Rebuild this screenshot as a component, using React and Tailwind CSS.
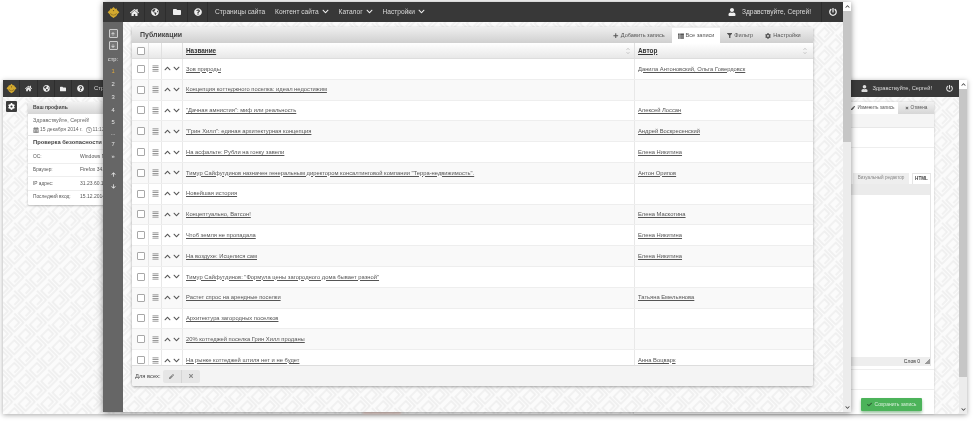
import {
  FaAlignJustify,
  FaArrowDown,
  FaArrowUp,
  FaCalendarAlt,
  FaCheck,
  FaChevronDown,
  FaChevronUp,
  FaCog,
  FaFilter,
  FaFolder,
  FaGlobeAmericas,
  FaHome,
  FaPen,
  FaPlus,
  FaPowerOff,
  FaQuestionCircle,
  FaRegClock,
  FaThList,
  FaTimes,
  FaUser,
} from "react-icons/fa";

const rows = [
  ["Зов природы", "Данила Антоновский, Ольга Говердовск"],
  ["Концепция коттеджного поселка: идеал недостижим", ""],
  ["\"Дачная амнистия\": миф или реальность", "Алексей Лоссан"],
  ["\"Грин Хилл\": единая архитектурная концепция", "Андрей Воскресенский"],
  ["На асфальте: Рубли на гонку завели", "Елена Никитина"],
  ["Тимур Сайфутдинов назначен генеральным директором консалтинговой компании \"Терра-недвижимость\".", "Антон Орипов"],
  ["Новейшая история", ""],
  ["Концептуально, Ватсон!", "Елена Маскотина"],
  ["Чтоб земля не пропадала", "Елена Никитина"],
  ["На воздухе: Исцелися сам", "Елена Никитина"],
  ["Тимур Сайфутдинов: \"Формула цены загородного дома бывает разной\"", ""],
  ["Растет спрос на арендные поселки", "Татьяна Емельянова"],
  ["Архитектура загородных поселков", ""],
  ["20% коттеджей поселка Грин Хилл проданы", ""],
  ["На рынке коттеджей штиля нет и не будет", "Анна Воцварк"],
];

const securityRows = [
  ["ОС:", "Windows NT 6.1"],
  ["Браузер:", "Firefox 34.0"],
  ["IP адрес:", "31.23.60.124"],
  ["Последний вход:", "15.12.2014"],
];

const pages = ["2", "3", "4", "5"];

function Logo({ size }) {
  return (
    <svg width={size} height={size} viewBox="0 0 20 20">
      <path
        d="M10 1.5l3 3 1.5-1 1 2.500 3.500 3.500-3 3-1.500 3-4.500 3-4.500-3-1.500-3-3-3 3.500-3.500 1-2.500 1.500 1z"
        fill="#d3a92f"
      />
      <path d="M5.5 11a4.500 3 0 0 0 9 0" fill="none" stroke="#6b5620" strokeWidth="0.9" />
      <circle cx="10" cy="7" r="1" fill="#6b5620" />
    </svg>
  );
}

function Pattern({ id }) {
  return (
    <svg className="absolute inset-0 h-full w-full" aria-hidden="true">
      <defs>
        <pattern id={id} width="16" height="16" patternUnits="userSpaceOnUse" patternTransform="rotate(45)">
          <path d="M1 1h13v13H4V4h7v7" fill="none" stroke="#ededed" strokeWidth="1.4" />
        </pattern>
      </defs>
      <rect width="100%" height="100%" fill={`url(#${id})`} />
    </svg>
  );
}

function Scrollbar({ thumb }) {
  return (
    <div className="flex h-full w-[8px] flex-col bg-[#ececec] text-[#444]">
      <div className="flex h-[9px] shrink-0 items-center justify-center bg-white">
        <FaChevronUp className="text-[5px]" />
      </div>
      <div className={`${thumb} shrink-0 bg-[#c6c6c6]`} />
      <div className="flex-1" />
      <div className="flex h-[9px] shrink-0 items-center justify-center">
        <FaChevronDown className="text-[5px]" />
      </div>
    </div>
  );
}

function NavIcon({ children, w }) {
  return (
    <div className={`${w} flex h-full items-center justify-center border-r border-[#2d2d2d] text-[#eeeeee]`}>
      {children}
    </div>
  );
}

function MenuItem({ label, arrow }) {
  return (
    <div className="flex items-center gap-[3px] whitespace-nowrap text-[6.6px] text-[#d8d8d8]">
      {label}
      {arrow && <FaChevronDown className="text-[7px] text-[#eeeeee]" />}
    </div>
  );
}

function PanelTab({ icon, label, active, w, size }) {
  return (
    <div
      className={`${w} ${size} flex h-full items-center justify-center gap-[2px] whitespace-nowrap text-[#555] ${
        active ? "bg-white" : ""
      }`}
    >
      {icon}
      {label}
    </div>
  );
}

function Checkbox() {
  return <span className="ml-[1px] block h-[8px] w-[8px] rounded-[1px] border border-[#a8a8a8] bg-white" />;
}

function SortArrows() {
  return (
    <span className="flex flex-col text-[#c4c4c4]">
      <FaChevronUp className="text-[4px]" />
      <FaChevronDown className="text-[4px]" />
    </span>
  );
}

function BackWindow() {
  return (
    <div className="absolute left-[3px] top-[80px] flex h-[334px] w-[964px] shadow-[0_1px_5px_rgba(0,0,0,0.35)]">
      <div className="flex min-w-0 flex-1 flex-col">
        <header className="flex h-[17px] shrink-0 items-center bg-[#3a3a3a]">
          <NavIcon w="w-[17px]">
            <Logo size={11} />
          </NavIcon>
          <NavIcon w="w-[18px]">
            <FaHome className="text-[7px]" />
          </NavIcon>
          <NavIcon w="w-[17px]">
            <FaGlobeAmericas className="text-[7px]" />
          </NavIcon>
          <NavIcon w="w-[17px]">
            <FaFolder className="text-[6px]" />
          </NavIcon>
          <NavIcon w="w-[17px]">
            <FaQuestionCircle className="text-[7px]" />
          </NavIcon>
          <span className="ml-[5px] text-[6px] text-[#ddd]">Страницы</span>
          <div className="ml-auto flex items-center pr-[6px] text-[5.7px] text-[#ddd]">
            <FaUser className="mr-[4px] text-[7px]" />
            Здравствуйте, Сергей!
            <FaPowerOff className="ml-[14px] text-[7px]" />
          </div>
        </header>
        <div className="relative flex min-h-0 flex-1 bg-[#fbfbfb]">
          <Pattern id="back-bg" />
          <div className="relative w-[25px] shrink-0 pl-[3px] pt-[4px]">
            <div className="flex h-[11px] w-[11px] items-center justify-center rounded-[1px] bg-[#3c3c3c] text-white">
              <FaCog className="text-[7px]" />
            </div>
          </div>
          <section className="relative mt-[5px] h-[103px] w-[200px] self-start overflow-hidden rounded-[1px] bg-white text-[5px] text-[#555] shadow-[0_1px_2px_rgba(0,0,0,0.25)]">
            <div className="flex h-[12px] items-center bg-gradient-to-b from-[#f2f2f2] to-[#d6d6d6] pl-[5px] font-bold text-[#444]">
              Ваш профиль
            </div>
            <div className="h-[22px] border-b border-[#e5e5e5] px-[5px] pt-[1px] text-[#666]">
              <p className="text-[5.4px] leading-[10px]">Здравствуйте, Сергей!</p>
              <p className="flex items-center gap-[1px] leading-[9px]">
                <FaCalendarAlt className="text-[6px] text-[#888]" />
                15 декабря 2014 г.
                <FaRegClock className="ml-[2px] text-[6px] text-[#888]" />
                11:12
              </p>
            </div>
            <p className="px-[5px] pt-[2px] text-[5.8px] font-bold leading-[9px] text-[#444]">Проверка безопасности</p>
            <div className="mt-[2px]">
              {securityRows.map(([label, value]) => (
                <div key={label} className="flex h-[13.6px] items-center border-t border-[#eeeeee] px-[5px]">
                  <span className="w-[47px] shrink-0 text-[4.8px]">{label}</span>
                  {value}
                </div>
              ))}
            </div>
          </section>
          <section className="relative ml-auto mr-[25px] mt-[5px] flex w-[300px] shrink-0 flex-col bg-white text-[4.6px] text-[#555] shadow-[0_0_2px_rgba(0,0,0,0.2)]">
            <div className="flex h-[12px] shrink-0 justify-end bg-gradient-to-b from-[#f2f2f2] to-[#d6d6d6]">
              <PanelTab active w="w-[50px]" size="text-[4.7px]" icon={<FaPen className="text-[4px]" />} label="Изменить запись" />
              <PanelTab w="w-[36px]" size="text-[4.7px]" icon={<FaTimes className="text-[4px]" />} label="Отмена" />
            </div>
            <div className="h-[14px] shrink-0 border-b border-[#e8e8e8] bg-[#f5f5f5]" />
            <div className="h-[20px] shrink-0 border-b border-[#eeeeee]" />
            <div className="flex h-[36px] shrink-0 items-end justify-end gap-[3px] pr-[3px]">
              <span className="flex h-[11px] w-[56px] items-center justify-center bg-[#eeeeee] text-[#888]">
                Визуальный редактор
              </span>
              <span className="flex h-[11px] w-[19px] items-center justify-center border-x border-t border-[#e5e5e5] font-bold text-[#444]">
                HTML
              </span>
            </div>
            <div className="mr-[3px] flex min-h-0 flex-1 flex-col border-x border-[#e5e5e5]">
              <div className="h-[11px] shrink-0 bg-[#ebebeb]" />
              <div className="flex-1" />
              <div className="flex h-[9px] shrink-0 items-center justify-end gap-[5px] bg-[#eeeeee] text-[5px] text-[#333]">
                Слов 0
                <span className="block h-[5px] w-[5px] bg-gradient-to-br from-transparent from-50% to-[#999] to-50%" />
              </div>
            </div>
            <div className="h-[4px] shrink-0 border-b border-[#eeeeee]" />
            <div className="h-[20px] shrink-0 border-b border-[#eeeeee]" />
            <div className="flex h-[24px] shrink-0 items-start justify-end pr-[12px] pt-[8px]">
              <button className="flex h-[13px] w-[61px] items-center justify-center gap-[3px] rounded-[1px] bg-[#4cb35a] text-[5px] text-[#d9f0dc] shadow-[0_2px_3px_rgba(60,140,70,0.5)]">
                <FaCheck className="text-[5px] text-[#2f5f35]" />
                Сохранить запись
              </button>
            </div>
          </section>
        </div>
      </div>
      <Scrollbar thumb="h-[288px]" />
    </div>
  );
}

function FrontWindow() {
  return (
    <div className="absolute left-[103px] top-[2px] flex h-[410px] w-[748px] shadow-[0_1px_6px_rgba(0,0,0,0.45)]">
      <div className="flex min-w-0 flex-1 flex-col">
        <header className="flex h-[20px] shrink-0 items-center bg-[#383838]">
          <NavIcon w="w-[21px]">
            <Logo size={13} />
          </NavIcon>
          <NavIcon w="w-[21px]">
            <FaHome className="text-[9px]" />
          </NavIcon>
          <NavIcon w="w-[21px]">
            <FaGlobeAmericas className="text-[8px]" />
          </NavIcon>
          <NavIcon w="w-[22px]">
            <FaFolder className="text-[8px]" />
          </NavIcon>
          <NavIcon w="w-[20px]">
            <FaQuestionCircle className="text-[8px]" />
          </NavIcon>
          <nav className="ml-[7px] flex items-center gap-[10px]">
            <MenuItem label="Страницы сайта" />
            <MenuItem label="Контент сайта" arrow />
            <MenuItem label="Каталог" arrow />
            <MenuItem label="Настройки" arrow />
          </nav>
          <div className="ml-auto flex h-full items-center text-[6.6px] text-[#ddd]">
            <FaUser className="mr-[6px] text-[8px] text-[#eee]" />
            Здравствуйте, Сергей!
            <div className="ml-[10px] flex h-full w-[22px] items-center justify-center border-l border-[#2d2d2d] text-[#eee]">
              <FaPowerOff className="text-[8px]" />
            </div>
          </div>
        </header>
        <div className="flex min-h-0 flex-1">
          <aside className="flex w-[20px] shrink-0 flex-col items-center bg-[#666666] pt-[7px] text-[5.8px] text-[#e6e6e6]">
            <span className="flex h-[9px] w-[9px] items-center justify-center rounded-[1px] border border-[#ccc] bg-[#777]">
              <FaArrowUp className="text-[4px]" />
            </span>
            <span className="mt-[3px] flex h-[9px] w-[9px] items-center justify-center rounded-[1px] border border-[#ccc] bg-[#777]">
              <FaArrowDown className="text-[4px]" />
            </span>
            <span className="mt-[4px] h-[11px] leading-[11px]">стр:</span>
            <span className="h-[13px] leading-[13px] text-[#e0a93a]">1</span>
            {pages.map((page) => (
              <span key={page} className="h-[12.8px] leading-[12.8px]">{page}</span>
            ))}
            <span className="h-[9px] leading-[9px]">...</span>
            <span className="h-[12px] leading-[12px]">7</span>
            <span className="h-[13px] leading-[13px]">»</span>
            <FaArrowUp className="mt-[9px] text-[5px]" />
            <FaArrowDown className="mt-[7px] text-[5px]" />
          </aside>
          <main className="relative min-w-0 flex-1 bg-[#fbfbfb] pl-[9px] pt-[5px]">
            <Pattern id="front-bg" />
            <section className="relative flex h-[359px] w-[681px] flex-col overflow-hidden rounded-[2px] bg-white shadow-[0_1px_3px_rgba(0,0,0,0.35)]">
              <div className="flex h-[16px] shrink-0 items-center bg-gradient-to-b from-[#efefef] to-[#d0d0d0]">
                <span className="pl-[8px] text-[7px] font-bold text-[#444]">Публикации</span>
                <div className="ml-auto mr-[7px] flex h-full pt-[1px]">
                  <PanelTab w="w-[54px] mr-[6px]" size="text-[5.6px]" icon={<FaPlus className="text-[5.5px]" />} label="Добавить запись" />
                  <PanelTab active w="w-[48px]" size="text-[5.6px]" icon={<FaThList className="text-[6px]" />} label="Все записи" />
                  <PanelTab w="w-[40px]" size="text-[5.6px]" icon={<FaFilter className="text-[5.5px]" />} label="Фильтр" />
                  <PanelTab w="w-[46px]" size="text-[5.6px]" icon={<FaCog className="text-[6px]" />} label="Настройки" />
                </div>
              </div>
              <div className="flex h-[16px] shrink-0 border-b border-[#dddddd] bg-gradient-to-b from-[#ffffff] to-[#e8e8e8] text-[6.4px] font-bold text-[#333]">
                <div className="flex w-[17px] items-center justify-center border-r border-[#e0e0e0]">
                  <Checkbox />
                </div>
                <div className="w-[13px] border-r border-[#e0e0e0]" />
                <div className="w-[21px] border-r border-[#e0e0e0]" />
                <div className="flex w-[452px] items-center justify-between border-r border-[#e0e0e0] pl-[3px] pr-[4px]">
                  <span className="underline">Название</span>
                  <SortArrows />
                </div>
                <div className="flex flex-1 items-center justify-between pl-[3px] pr-[6px]">
                  <span className="underline">Автор</span>
                  <SortArrows />
                </div>
              </div>
              <div className="min-h-0 flex-1 overflow-hidden">
                {rows.map(([title, author], i) => (
                  <div
                    key={title}
                    className={`flex h-[20.8px] border-b border-[#eeeeee] text-[5.8px] text-[#555] ${
                      i % 2 ? "bg-[#f9f9f9]" : "bg-white"
                    }`}
                  >
                    <div className="flex w-[17px] items-center justify-center border-r border-[#e8e8e8]">
                      <Checkbox />
                    </div>
                    <div className="flex w-[13px] items-center justify-center border-r border-[#e8e8e8] text-[#777]">
                      <FaAlignJustify className="text-[7px]" />
                    </div>
                    <div className="flex w-[21px] items-center justify-center gap-[2px] border-r border-[#e8e8e8] text-[#555]">
                      <FaChevronUp className="text-[7px]" />
                      <FaChevronDown className="text-[7px]" />
                    </div>
                    <div className="flex w-[452px] items-center border-r border-[#e8e8e8] pl-[3px]">
                      <span className="whitespace-nowrap underline">{title}</span>
                    </div>
                    <div className="flex flex-1 items-center pl-[3px]">
                      <span className="whitespace-nowrap underline">{author}</span>
                    </div>
                  </div>
                ))}
              </div>
              <div className="flex h-[21px] shrink-0 items-center gap-[2px] border-t border-[#dddddd] bg-[#f4f4f4] pl-[3px] text-[5.8px] text-[#444]">
                Для всех:
                <div className="flex h-[13px] items-center rounded-[2px] bg-[#e6e6e6] text-[#888]">
                  <span className="flex h-full w-[19px] items-center justify-center border-r border-[#d5d5d5]">
                    <FaPen className="text-[5px]" />
                  </span>
                  <span className="flex h-full w-[18px] items-center justify-center">
                    <FaTimes className="text-[6px]" />
                  </span>
                </div>
              </div>
            </section>
          </main>
        </div>
      </div>
      <Scrollbar thumb="h-[131px]" />
    </div>
  );
}

export default function App() {
  return (
    <div className="relative h-[422px] w-[974px] overflow-hidden bg-white font-['Liberation_Sans',Arial,sans-serif] blur-[0.35px]">
      <BackWindow />
      <div className="absolute left-[363px] top-[411px] h-[3px] w-[38px] bg-[#e8cdc6] blur-[1px]" />
      <FrontWindow />
    </div>
  );
}
